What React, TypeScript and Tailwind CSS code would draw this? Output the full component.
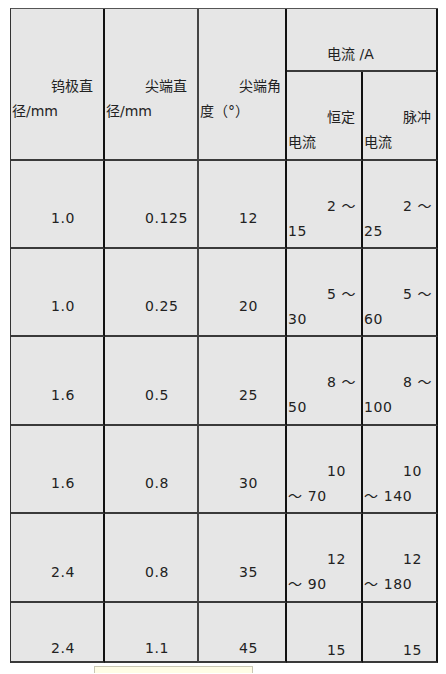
const font = { fontFamily: '"DejaVu Sans", Verdana, "Noto Sans CJK SC", sans-serif' };

type CellProps = {
  children: React.ReactNode;
  className?: string;
  pad?: string;
};

function Cell({ children, className = "", pad = "pt-[29px]" }: CellProps) {
  return (
    <div className={`flex items-center bg-[#e6e6e6] border-r-2 border-b-2 border-r-[#111] border-b-[#3a3a3a] pl-px ${pad} ${className}`}>
      <div className="w-full indent-[39px]">{children}</div>
    </div>
  );
}

const rows = [
  { d: "1.0", t: "0.125", a: "12", c: ["2 ～", "15"], p: ["2 ～", "25"] },
  { d: "1.0", t: "0.25", a: "20", c: ["5 ～", "30"], p: ["5 ～", "60"] },
  { d: "1.6", t: "0.5", a: "25", c: ["8 ～", "50"], p: ["8 ～", "100"] },
  { d: "1.6", t: "0.8", a: "30", c: ["10", "～ 70"], p: ["10", "～ 140"] },
  { d: "2.4", t: "0.8", a: "35", c: ["12", "～ 90"], p: ["12", "～ 180"] },
];

export default function App() {
  return (
    <div className="bg-white w-[446px] h-[674px] overflow-hidden pt-[8px] text-[14px] leading-[25px] text-[#222]" style={font}>
      <div className="ml-[10px] w-[428px] border-l border-t border-l-[#333] border-t-[#555]">
        <div className="grid grid-cols-[94px_94px_88px_76px_75px] grid-rows-[63px_89px_88px_88px_89px_88px_89px_60px]">
          <Cell className="row-span-2">钨极直径/mm</Cell>
          <Cell className="row-span-2 border-r-[#444]">尖端直径/mm</Cell>
          <Cell className="row-span-2">尖端角度（°）</Cell>
          <Cell className="col-span-2">电流 /A</Cell>
          <Cell>恒定<br />电流</Cell>
          <Cell>脉冲<br />电流</Cell>

          {rows.map((r, i) => (
            <>
              <Cell key={`d${i}`} className="tracking-[0.6px]">{r.d}</Cell>
              <Cell key={`t${i}`} className="border-r-[#444] tracking-[0.6px]">{r.t}</Cell>
              <Cell key={`a${i}`} className="tracking-[0.6px]">{r.a}</Cell>
              <Cell key={`c${i}`} className="tracking-[0.6px]">{r.c[0]}<br />{r.c[1]}</Cell>
              <Cell key={`p${i}`} className="tracking-[0.6px]">{r.p[0]}<br />{r.p[1]}</Cell>
            </>
          ))}

          <Cell pad="pt-[33px]" className="tracking-[0.6px]">2.4</Cell>
          <Cell pad="pt-[33px]" className="border-r-[#444] tracking-[0.6px]">1.1</Cell>
          <Cell pad="pt-[33px]" className="tracking-[0.6px]">45</Cell>
          <Cell pad="pt-[37px]" className="tracking-[0.6px]">15</Cell>
          <Cell pad="pt-[37px]" className="tracking-[0.6px]">15</Cell>
        </div>
      </div>
      <div className="ml-[94px] mt-[3px] w-[159px] h-[7px] bg-[#fffde6] border-t border-l border-r border-[#c9c7b4]"></div>
    </div>
  );
}
